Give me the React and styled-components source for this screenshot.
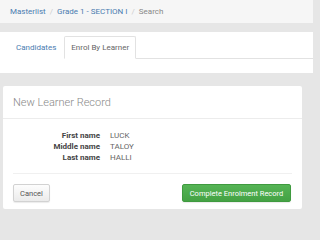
import React from "react";
import styled, { createGlobalStyle } from "styled-components";

const GlobalStyle = createGlobalStyle`
  html, body {
    margin: 0;
    padding: 0;
    background: #e6e6e6;
    font-family: Roboto, "Liberation Sans", Arial, sans-serif;
    font-size: 8px;
    color: #555;
  }
`;

const Page = styled.div`
  width: 313px;
  height: 225px;
  overflow: hidden;
  display: flex;
  flex-direction: column;
`;

const Breadcrumb = styled.nav`
  height: 23px;
  background: #f6f6f6;
  display: flex;
  align-items: center;
  padding-left: 10px;
  gap: 4px;
  margin-bottom: 9px;
`;

const Crumb = styled.span`
  color: ${(p) => (p.$active ? "#888" : "#4a7cb0")};
`;

const Sep = styled.span`
  color: #ccc;
`;

const TabPanel = styled.div`
  background: #fff;
  height: 41px;
  padding: 4px 0 0 8px;
  box-sizing: border-box;
  margin-bottom: 13px;
`;

const TabList = styled.div`
  display: flex;
  height: 22px;
  border-bottom: 1px solid #e2e2e2;
`;

const Tab = styled.div`
  display: flex;
  align-items: center;
  padding: 0 ${(p) => (p.$active ? "6px" : "7px")};
  margin-bottom: -1px;
  font-size: 8px;
  color: ${(p) => (p.$active ? "#666" : "#4a7cb0")};
  background: #fff;
  border: 1px solid ${(p) => (p.$active ? "#e2e2e2" : "transparent")};
  border-bottom-color: ${(p) => (p.$active ? "#fff" : "transparent")};
  border-radius: 2px 2px 0 0;
`;

const Card = styled.section`
  background: #fff;
  width: 299px;
  margin-left: 3px;
  height: 123px;
  box-sizing: border-box;
  border-radius: 2px;
  display: flex;
  flex-direction: column;
`;

const CardHeader = styled.div`
  height: 33px;
  box-sizing: border-box;
  padding: 0 10px;
  display: flex;
  align-items: center;
  border-bottom: 1px solid #ececec;
  font-size: 11px;
  font-weight: 300;
  color: #888;
`;

const Details = styled.dl`
  margin: 11px 0 0;
  display: grid;
  grid-template-columns: 97px auto;
  column-gap: 10px;
  line-height: 11px;
`;

const Label = styled.dt`
  text-align: right;
  font-weight: 700;
  color: #444;
`;

const Value = styled.dd`
  margin: 0;
  color: #666;
`;

const Divider = styled.hr`
  margin: 10px 10px 0;
  border: 0;
  border-top: 1px solid #f0f0f0;
`;

const Footer = styled.div`
  display: flex;
  justify-content: space-between;
  padding: 10px 11px 0 10px;
`;

const Button = styled.button`
  height: 18px;
  box-sizing: border-box;
  padding: 0;
  white-space: nowrap;
  font-family: inherit;
  font-size: 7.5px;
  border-radius: 2px;
  cursor: pointer;
  color: ${(p) => (p.$primary ? "#fff" : "#555")};
  border: 1px solid ${(p) => (p.$primary ? "#3f9a3f" : "#d2d2d2")};
  background: ${(p) =>
    p.$primary
      ? "linear-gradient(#55b455, #44a244)"
      : "linear-gradient(#fdfdfd, #ebebeb)"};
  box-shadow: 0 1px 1px rgba(0, 0, 0, 0.08);
  width: ${(p) => (p.$primary ? "109px" : "37px")};
`;

const rows = [
  ["First name", "LUCK"],
  ["Middle name", "TALOY"],
  ["Last name", "HALLI"],
];

export default function App() {
  return (
    <Page>
      <GlobalStyle />
      <Breadcrumb>
        <Crumb>Masterlist</Crumb>
        <Sep>/</Sep>
        <Crumb>Grade 1 - SECTION I</Crumb>
        <Sep>/</Sep>
        <Crumb $active>Search</Crumb>
      </Breadcrumb>
      <TabPanel>
        <TabList>
          <Tab>Candidates</Tab>
          <Tab $active>Enrol By Learner</Tab>
        </TabList>
      </TabPanel>
      <Card>
        <CardHeader>New Learner Record</CardHeader>
        <Details>
          {rows.map(([label, value]) => (
            <React.Fragment key={label}>
              <Label>{label}</Label>
              <Value>{value}</Value>
            </React.Fragment>
          ))}
        </Details>
        <Divider />
        <Footer>
          <Button>Cancel</Button>
          <Button $primary>Complete Enrolment Record</Button>
        </Footer>
      </Card>
    </Page>
  );
}
